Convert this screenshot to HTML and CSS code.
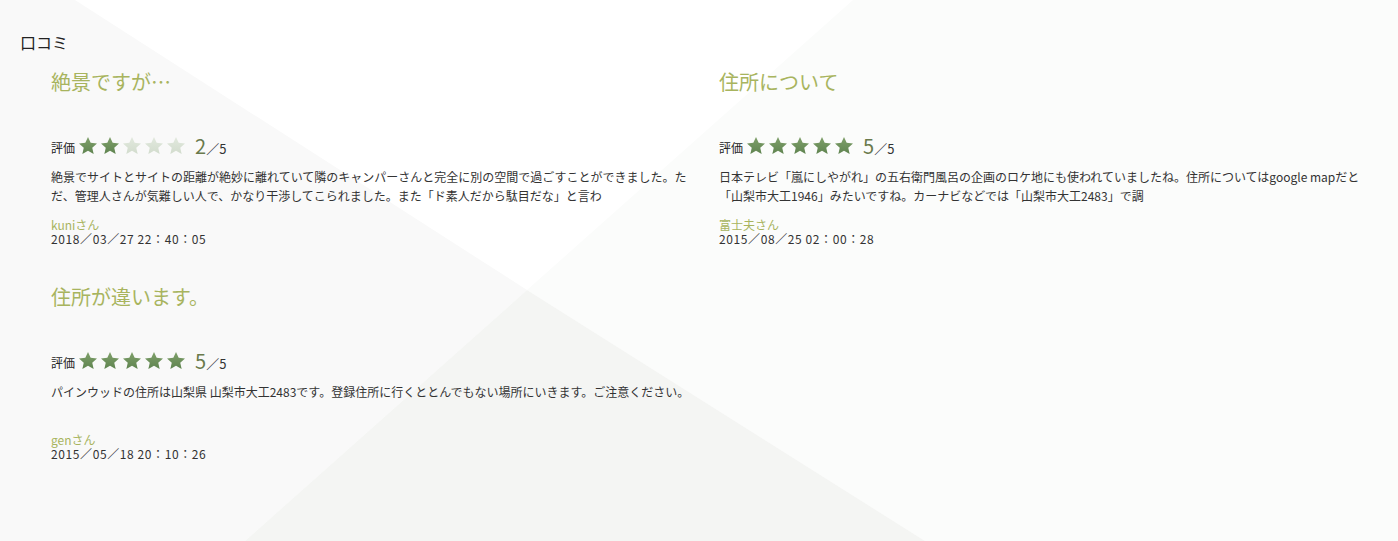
FILE: index.html
```html
<!DOCTYPE html>
<html lang="ja">
<head>
<meta charset="utf-8">
<title>口コミ</title>
<link rel="stylesheet" href="styles.css">
</head>
<body>
<svg class="bg" viewBox="0 0 1398 541" preserveAspectRatio="none" aria-hidden="true">
  <rect x="0" y="0" width="1398" height="541" fill="#ffffff"/>
  <polygon points="0,0 75,0 527,290 245,541 0,541" fill="#f9f9f9"/>
  <polygon points="853,0 1398,0 1398,541 925,541 527,290" fill="#fbfcfb"/>
  <polygon points="245,541 527,290 925,541" fill="#f4f5f3"/>
</svg>
<svg width="0" height="0" class="defs" aria-hidden="true">
  <defs>
    <linearGradient id="gOn" x1="0" y1="0" x2="0" y2="1">
      <stop offset="0" stop-color="#7fa06a"/>
      <stop offset="1" stop-color="#5f8450"/>
    </linearGradient>
    <linearGradient id="gOff" x1="0" y1="0" x2="0" y2="1">
      <stop offset="0" stop-color="#e2e9de"/>
      <stop offset="1" stop-color="#d2dccd"/>
    </linearGradient>
    <path id="star" d="M12 1.2l3.2 7 7.6.8-5.7 5.1 1.7 7.5L12 17.8l-6.8 3.8 1.7-7.5L1.2 9l7.6-.8z"/>
  </defs>
</svg>

<main class="page">
  <h2 class="heading">口コミ</h2>
  <div class="reviews">
    <article class="review">
      <h3 class="title">絶景ですが…</h3>
      <div class="rating">
        <span class="label">評価</span>
        <span class="stars">
          <svg class="star on" viewBox="0 0 24 24"><use href="#star"/></svg>
          <svg class="star on" viewBox="0 0 24 24"><use href="#star"/></svg>
          <svg class="star off" viewBox="0 0 24 24"><use href="#star"/></svg>
          <svg class="star off" viewBox="0 0 24 24"><use href="#star"/></svg>
          <svg class="star off" viewBox="0 0 24 24"><use href="#star"/></svg>
        </span>
        <span class="score">2</span><span class="max">／5</span>
      </div>
      <p class="text">絶景でサイトとサイトの距離が絶妙に離れていて隣のキャンパーさんと完全に別の空間で過ごすことができました。ただ、管理人さんが気難しい人で、かなり干渉してこられました。また「ド素人だから駄目だな」と言わ</p>
      <div class="name">kuniさん</div>
      <div class="date">2018／03／27 22：40：05</div>
    </article>

    <article class="review">
      <h3 class="title">住所について</h3>
      <div class="rating">
        <span class="label">評価</span>
        <span class="stars">
          <svg class="star on" viewBox="0 0 24 24"><use href="#star"/></svg>
          <svg class="star on" viewBox="0 0 24 24"><use href="#star"/></svg>
          <svg class="star on" viewBox="0 0 24 24"><use href="#star"/></svg>
          <svg class="star on" viewBox="0 0 24 24"><use href="#star"/></svg>
          <svg class="star on" viewBox="0 0 24 24"><use href="#star"/></svg>
        </span>
        <span class="score">5</span><span class="max">／5</span>
      </div>
      <p class="text">日本テレビ「嵐にしやがれ」の五右衛門風呂の企画のロケ地にも使われていましたね。住所についてはgoogle mapだと「山梨市大工1946」みたいですね。カーナビなどでは「山梨市大工2483」で調</p>
      <div class="name">富士夫さん</div>
      <div class="date">2015／08／25 02：00：28</div>
    </article>

    <article class="review">
      <h3 class="title">住所が違います。</h3>
      <div class="rating">
        <span class="label">評価</span>
        <span class="stars">
          <svg class="star on" viewBox="0 0 24 24"><use href="#star"/></svg>
          <svg class="star on" viewBox="0 0 24 24"><use href="#star"/></svg>
          <svg class="star on" viewBox="0 0 24 24"><use href="#star"/></svg>
          <svg class="star on" viewBox="0 0 24 24"><use href="#star"/></svg>
          <svg class="star on" viewBox="0 0 24 24"><use href="#star"/></svg>
        </span>
        <span class="score">5</span><span class="max">／5</span>
      </div>
      <p class="text">パインウッドの住所は山梨県 山梨市大工2483です。登録住所に行くととんでもない場所にいきます。ご注意ください。</p>
      <div class="name">genさん</div>
      <div class="date">2015／05／18 20：10：26</div>
    </article>
  </div>
</main>
</body>
</html>
```

FILE: styles.css
```css
html, body {
  margin: 0;
  padding: 0;
}

body {
  position: relative;
  width: 1398px;
  height: 541px;
  overflow: hidden;
  font-family: "Noto Sans CJK JP", "Noto Sans", sans-serif;
  color: #333333;
  background: #ffffff;
}

.bg {
  position: absolute;
  left: 0;
  top: 0;
  width: 1398px;
  height: 541px;
  z-index: 0;
}

.defs {
  position: absolute;
  width: 0;
  height: 0;
}

.page {
  position: relative;
  z-index: 1;
  padding: 30px 0 0 20px;
}

.heading {
  margin: 0;
  font-size: 16px;
  line-height: 24px;
  font-weight: normal;
  color: #222222;
}

.reviews {
  display: grid;
  grid-template-columns: 668px 668px;
  row-gap: 36px;
  margin-top: 13px;
}

.review {
  padding-left: 31px;
}

.title {
  margin: 0;
  font-size: 20px;
  line-height: 30px;
  font-weight: normal;
  color: #a8b45e;
}

.rating {
  display: flex;
  align-items: center;
  margin-top: 37px;
  height: 24px;
}

.label {
  font-size: 12px;
  line-height: 16px;
  margin-top: 4px;
  color: #222222;
}

.stars {
  display: flex;
  margin-left: 3px;
  gap: 2px;
}

.star {
  width: 20px;
  height: 20px;
}

.star.on {
  fill: url(#gOn);
}

.star.off {
  fill: url(#gOff);
}

.score {
  margin-left: 9px;
  font-size: 20px;
  line-height: 24px;
  color: #6a7a4c;
}

.max {
  font-size: 13px;
  line-height: 16px;
  margin-top: 5px;
  color: #333333;
}

.text {
  width: 645px;
  margin: 9px 0 0;
  font-size: 12px;
  line-height: 19px;
  min-height: 38px;
  color: #333333;
}

.name {
  margin-top: 13px;
  font-size: 12px;
  line-height: 14px;
  color: #a8b45e;
}

.date {
  font-size: 12px;
  line-height: 14px;
  letter-spacing: 0.6px;
  color: #333333;
}
```
